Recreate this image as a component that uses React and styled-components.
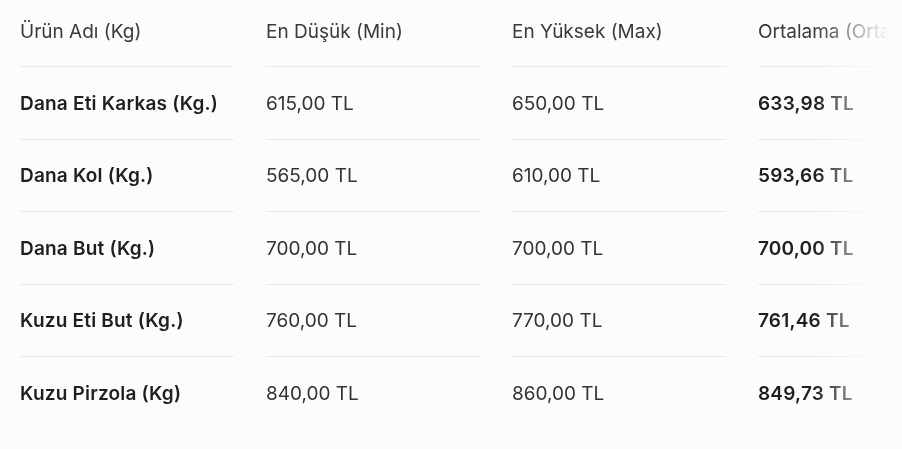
import React from "react";
import styled, { createGlobalStyle } from "styled-components";

const GlobalStyle = createGlobalStyle`
  html, body {
    margin: 0;
    padding: 0;
    background: #fcfcfc;
  }
  body {
    font-family: Inter, "Noto Sans", "Liberation Sans", sans-serif;
  }
`;

const Wrapper = styled.div`
  width: 902px;
  height: 449px;
  overflow: hidden;
  padding-left: 20px;
  box-sizing: border-box;
  -webkit-mask-image: linear-gradient(to right, #000 0, #000 815px, transparent 889px);
  mask-image: linear-gradient(to right, #000 0, #000 815px, transparent 889px);
`;

const Table = styled.div`
  display: grid;
  grid-template-columns: repeat(4, 214px);
  column-gap: 32px;
  width: max-content;
`;

const Cell = styled.div`
  display: flex;
  align-items: center;
  box-sizing: border-box;
  height: ${(p) => (p.$head ? "67px" : "72.5px")};
  padding-bottom: ${(p) => (p.$head ? "4px" : "0")};
  padding-top: ${(p) => (p.$head ? "0" : "1px")};
  border-bottom: ${(p) => (p.$last ? "none" : "1px solid #e8e8e8")};
  font-size: 19px;
  white-space: nowrap;
  color: ${(p) => (p.$head ? "#3a3a3a" : p.$bold ? "#1f1f1f" : "#333")};
  font-weight: ${(p) => (p.$bold ? 620 : 400)};
  letter-spacing: ${(p) => (p.$bold ? "0.2px" : "0")};
`;

const headers = ["Ürün Adı (Kg)", "En Düşük (Min)", "En Yüksek (Max)", "Ortalama (Ortalama)"];

const rows = [
  ["Dana Eti Karkas (Kg.)", "615,00 TL", "650,00 TL", "633,98 TL"],
  ["Dana Kol (Kg.)", "565,00 TL", "610,00 TL", "593,66 TL"],
  ["Dana But (Kg.)", "700,00 TL", "700,00 TL", "700,00 TL"],
  ["Kuzu Eti But (Kg.)", "760,00 TL", "770,00 TL", "761,46 TL"],
  ["Kuzu Pirzola (Kg)", "840,00 TL", "860,00 TL", "849,73 TL"],
];

export default function App() {
  return (
    <>
      <GlobalStyle />
      <Wrapper>
        <Table>
          {headers.map((h) => (
            <Cell key={h} $head>
              {h}
            </Cell>
          ))}
          {rows.map((r, i) =>
            r.map((v, j) => (
              <Cell
                key={i + "-" + j}
                $bold={j === 0 || j === 3}
                $last={i === rows.length - 1}
              >
                {v}
              </Cell>
            ))
          )}
        </Table>
      </Wrapper>
    </>
  );
}
